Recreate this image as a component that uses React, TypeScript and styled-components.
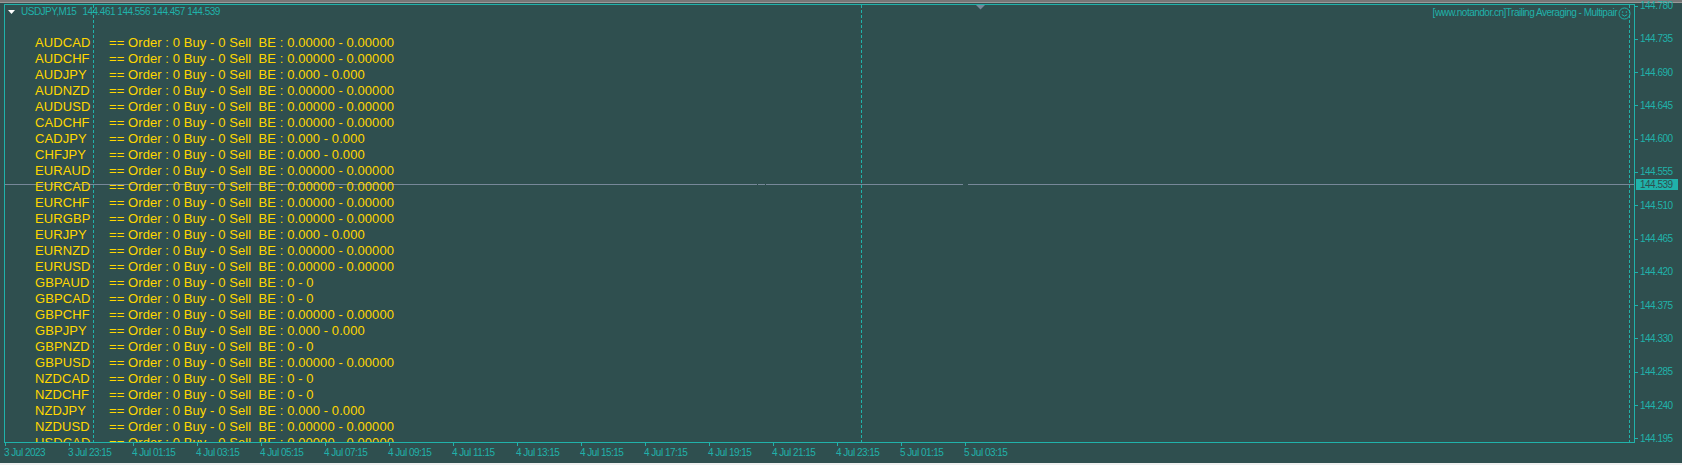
import React from 'react';
import styled, { createGlobalStyle } from 'styled-components';

const GlobalStyle = createGlobalStyle`
    html, body {
        margin: 0;
        padding: 0;
        background: #2f4f4f;
        overflow: hidden;
    }
`;

const TEAL = '#20b2aa';
const GOLD = '#ffd700';
const SLATE = '#778899';

const Screen = styled.div`
    width: 1682px;
    height: 465px;
    display: flex;
    flex-direction: column;
    background: #2f4f4f;
    font-family: "Liberation Sans", Arial, sans-serif;
`;

const TopBand = styled.div`
    height: 3px;
    margin-bottom: 1px;
    background: linear-gradient(#777 0 2px, #9a9a9a 2px);
`;

const Workspace = styled.div`
    display: grid;
    grid-template-columns: 1631px 47px;
    grid-template-rows: 439px 20px;
    padding-left: 4px;
`;

const ChartPane = styled.div`
    grid-column: 1;
    grid-row: 1;
    position: relative;
    border: 1px solid ${TEAL};
    overflow: hidden;
    display: flex;
    flex-direction: column;
`;

const ChartOverlay = styled.svg`
    position: absolute;
    left: 0;
    top: 0;
    width: 1629px;
    height: 437px;
`;

const ChartHeader = styled.div`
    position: relative;
    display: flex;
    align-items: center;
    justify-content: space-between;
    height: 12px;
    padding: 1px 3px 0 3px;
    font-size: 10px;
    line-height: 12px;
    letter-spacing: -0.5px;
    color: ${TEAL};
    white-space: nowrap;
`;

const SymbolTitle = styled.div`
    display: flex;
    align-items: center;
`;

const Quote = styled.span<{ $gap: number }>`
    margin-left: ${p => p.$gap}px;
`;

const IndicatorTitle = styled.div`
    display: flex;
    align-items: center;
    gap: 1px;
    margin-top: 2px;
`;

const OrderList = styled.div`
    position: relative;
    display: flex;
    flex-direction: column;
    margin-top: 17px;
    padding-left: 30px;
`;

const OrderRow = styled.div`
    display: grid;
    grid-template-columns: 74px auto;
    height: 16px;
    font-size: 13px;
    line-height: 16px;
    letter-spacing: 0.08px;
    color: ${GOLD};
    white-space: pre;
`;

const PriceAxis = styled.div`
    grid-column: 2;
    grid-row: 1 / 3;
    position: relative;
    margin-top: -4px;
    height: 445px;
    display: flex;
    flex-direction: column;
    justify-content: space-between;
`;

const PriceLabel = styled.div`
    display: flex;
    align-items: center;
    gap: 2px;
    height: 12px;
    font-size: 10px;
    line-height: 12px;
    letter-spacing: -0.5px;
    color: ${TEAL};
    white-space: nowrap;
`;

const Tick = styled.span`
    width: 3px;
    height: 1px;
    background: ${TEAL};
`;

const CurrentPrice = styled.div`
    position: absolute;
    left: 1px;
    top: 179px;
    width: 42px;
    height: 11px;
    background: ${TEAL};
    color: #2f4f4f;
    font-size: 10px;
    line-height: 11px;
    letter-spacing: -0.5px;
    padding-left: 4px;
    box-sizing: border-box;
`;

const TimeAxis = styled.div`
    grid-column: 1;
    grid-row: 2;
    display: grid;
    grid-template-columns: repeat(16, 64px);
`;

const TimeLabel = styled.div`
    display: flex;
    flex-direction: column;
    font-size: 10px;
    line-height: 12px;
    letter-spacing: -0.5px;
    color: ${TEAL};
    white-space: nowrap;
`;

const TimeTick = styled.span`
    width: 1px;
    height: 3px;
    margin: 0 0 1px 1px;
    background: ${TEAL};
`;

const BottomStrip = styled.div`
    height: 2px;
    background: #f0f0f0;
`;

const prices = [
    '144.780', '144.735', '144.690', '144.645', '144.600', '144.555', '144.510',
    '144.465', '144.420', '144.375', '144.330', '144.285', '144.240', '144.195',
];

const times = [
    '3 Jul 2023', '3 Jul 23:15', '4 Jul 01:15', '4 Jul 03:15', '4 Jul 05:15', '4 Jul 07:15',
    '4 Jul 09:15', '4 Jul 11:15', '4 Jul 13:15', '4 Jul 15:15', '4 Jul 17:15', '4 Jul 19:15',
    '4 Jul 21:15', '4 Jul 23:15', '5 Jul 01:15', '5 Jul 03:15',
];

const FIVE = '0.00000 - 0.00000';
const THREE = '0.000 - 0.000';
const ZERO = '0 - 0';

const pairs: [string, string][] = [
    ['AUDCAD', FIVE], ['AUDCHF', FIVE], ['AUDJPY', THREE], ['AUDNZD', FIVE], ['AUDUSD', FIVE],
    ['CADCHF', FIVE], ['CADJPY', THREE], ['CHFJPY', THREE], ['EURAUD', FIVE], ['EURCAD', FIVE],
    ['EURCHF', FIVE], ['EURGBP', FIVE], ['EURJPY', THREE], ['EURNZD', FIVE], ['EURUSD', FIVE],
    ['GBPAUD', ZERO], ['GBPCAD', ZERO], ['GBPCHF', FIVE], ['GBPJPY', THREE], ['GBPNZD', ZERO],
    ['GBPUSD', FIVE], ['NZDCAD', ZERO], ['NZDCHF', ZERO], ['NZDJPY', THREE], ['NZDUSD', FIVE],
    ['USDCAD', FIVE],
];

// bid line with the little breaks the terminal leaves in it
const bidSegments: [number, number][] = [[0, 752], [753, 760], [761, 958], [963, 1629]];

const Smiley = () => (
    <svg width="13" height="13" viewBox="0 0 13 13">
        <circle cx="6.5" cy="6.5" r="5.5" fill="none" stroke={TEAL} strokeWidth="1" />
        <circle cx="4.6" cy="5" r="0.8" fill={TEAL} />
        <circle cx="8.4" cy="5" r="0.8" fill={TEAL} />
        <path d="M3.8 7.6 Q6.5 10.6 9.2 7.6" fill="none" stroke={TEAL} strokeWidth="1" />
    </svg>
);

const App: React.FC = () => {
    return (
        <>
            <GlobalStyle />
            <Screen>
                <TopBand />
                <Workspace>
                    <ChartPane>
                        <ChartOverlay viewBox="0 0 1629 437">
                            {[88.5, 856.5, 1624.5].map(x => (
                                <line key={x} x1={x} y1={0} x2={x} y2={437} stroke={TEAL} strokeWidth="1" strokeDasharray="3 2" />
                            ))}
                            {bidSegments.map(([a, b]) => (
                                <line key={a} x1={a} y1={179.5} x2={b} y2={179.5} stroke={SLATE} strokeWidth="1" />
                            ))}
                            <polygon points="971,0 980,0 975.5,4.5" fill={SLATE} />
                        </ChartOverlay>

                        <ChartHeader>
                            <SymbolTitle>
                                <svg width="7" height="5" viewBox="0 0 7 5">
                                    <polygon points="0,0 7,0 3.5,4" fill="#fff" />
                                </svg>
                                <Quote $gap={6}>USDJPY,M15</Quote>
                                <Quote $gap={6}>144.461 144.556 144.457 144.539</Quote>
                            </SymbolTitle>
                            <IndicatorTitle>
                                <span>[www.notandor.cn]Trailing Averaging - Multipair</span>
                                <Smiley />
                            </IndicatorTitle>
                        </ChartHeader>

                        <OrderList>
                            {pairs.map(([symbol, be]) => (
                                <OrderRow key={symbol}>
                                    <span>{symbol}</span>
                                    <span>{`== Order : 0 Buy - 0 Sell  BE : ${be}`}</span>
                                </OrderRow>
                            ))}
                        </OrderList>
                    </ChartPane>

                    <PriceAxis>
                        {prices.map(p => (
                            <PriceLabel key={p}>
                                <Tick />
                                <span>{p}</span>
                            </PriceLabel>
                        ))}
                        <CurrentPrice>144.539</CurrentPrice>
                    </PriceAxis>

                    <TimeAxis>
                        {times.map(t => (
                            <TimeLabel key={t}>
                                <TimeTick />
                                <span>{t}</span>
                            </TimeLabel>
                        ))}
                    </TimeAxis>
                </Workspace>
                <BottomStrip />
            </Screen>
        </>
    );
};

export default App;
